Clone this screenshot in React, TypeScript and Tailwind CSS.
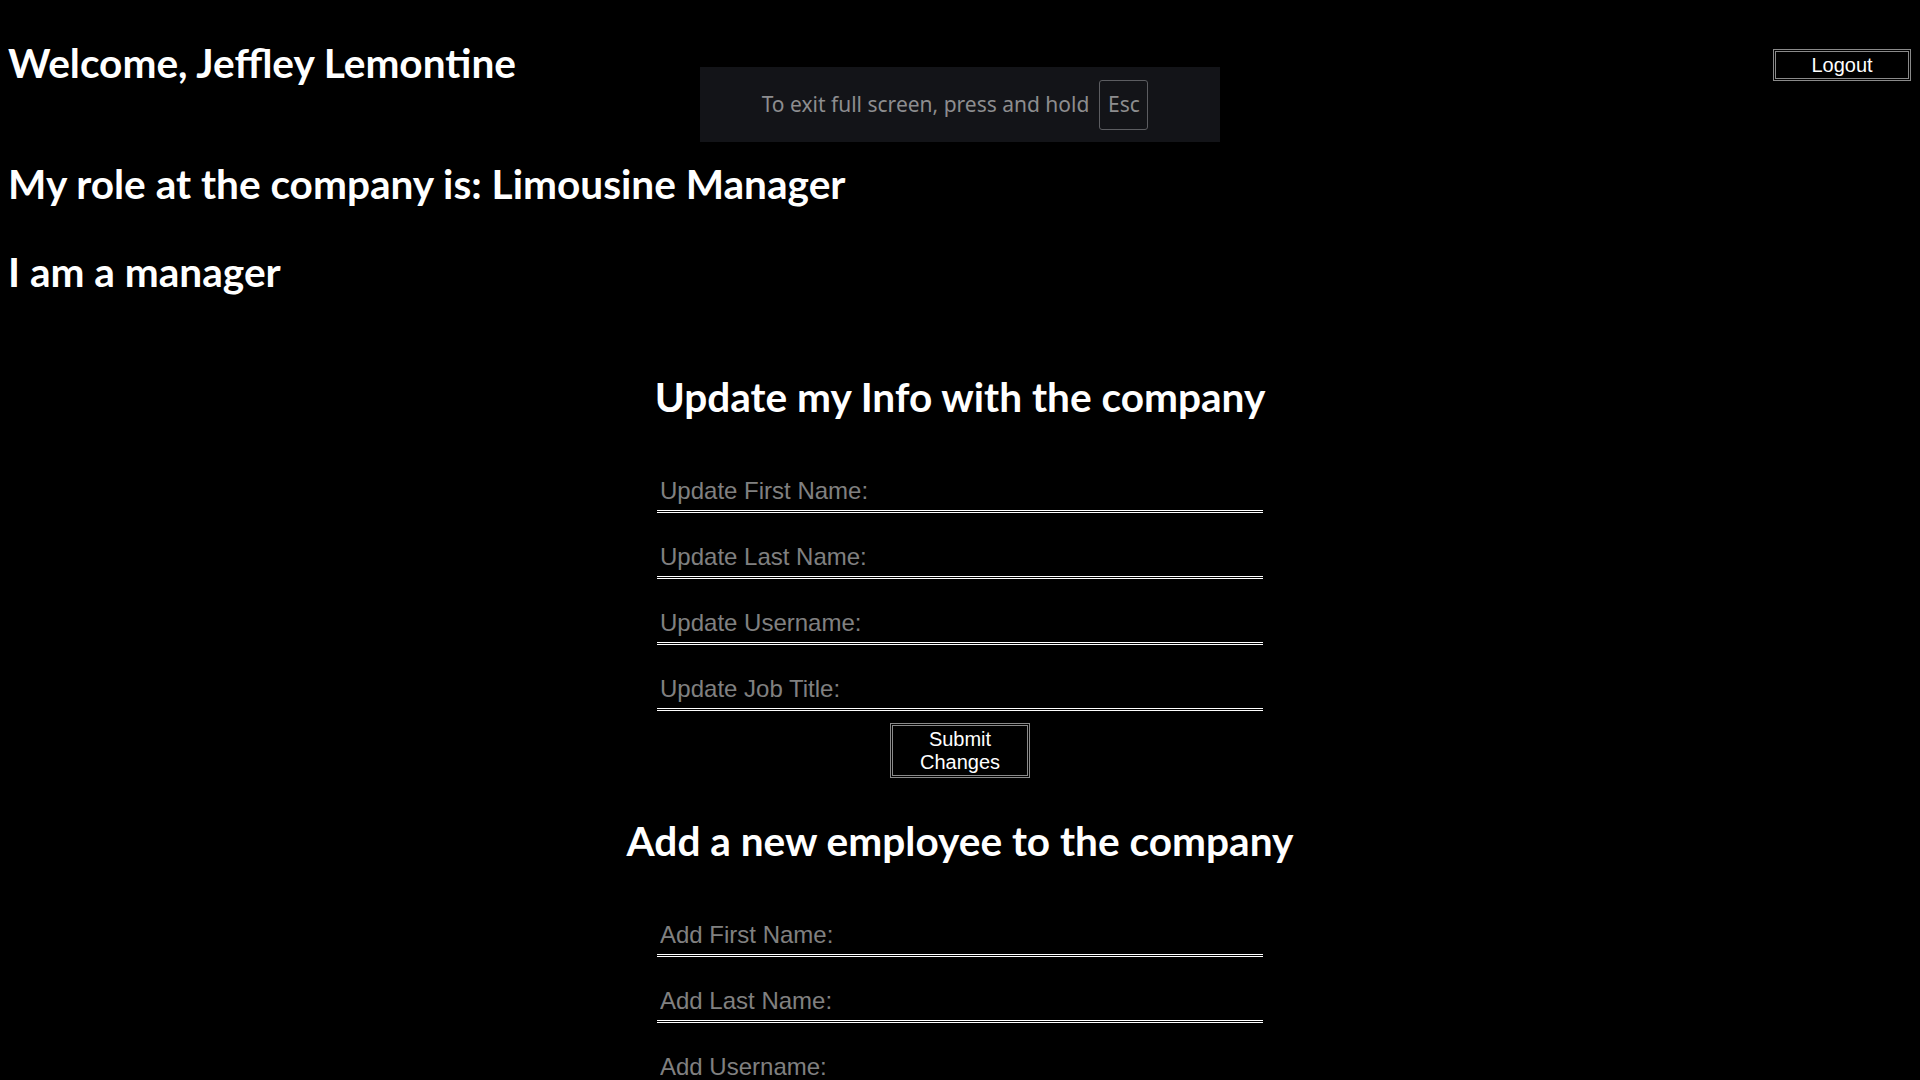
import React from "react";

const heading = "font-['Lato','Open_Sans',sans-serif] font-bold text-[40.6px] leading-[48px] text-white";

function Field({ placeholder, first }: { placeholder: string; first?: boolean }) {
  return (
    <input
      type="text"
      placeholder={placeholder}
      className={`${first ? "mt-[52px]" : "mt-[26px]"} block w-[606px] h-[40px] bg-transparent pl-[3px] pb-[2px] border-b-[3px] border-double border-white text-[24px] text-white font-['Liberation_Sans',Arial,sans-serif] placeholder:text-[#808080] outline-none`}
    />
  );
}

function FullscreenNotice() {
  return (
    <div className="fixed top-[67px] left-1/2 -translate-x-1/2 w-[520px] h-[75px] bg-[#131418] flex items-center justify-center gap-[10px] pr-[10px] font-['Noto_Sans','Open_Sans',sans-serif] text-[#8d8d8f]">
      <span className="text-[21px]">To exit full screen, press and hold</span>
      <span className="w-[49px] h-[50px] border border-[#5c5d61] rounded-[3px] flex items-center justify-center text-[21px]">Esc</span>
    </div>
  );
}

export default function App() {
  return (
    <div className="min-h-screen bg-black text-white px-[8px] pb-10">
      <div className="flex justify-between items-start">
        <h1 className={`${heading} mt-[39px]`}>Welcome, Jeffley Lemontine</h1>
        <button className="mt-[49px] mr-[1px] w-[138px] h-[32px] border-[3px] border-double border-[#8a8a8a] bg-black text-white text-[20px] leading-[23px] font-['Liberation_Sans',Arial,sans-serif]">
          Logout
        </button>
      </div>

      <h2 className={`${heading} mt-[73px]`}>My role at the company is: Limousine Manager</h2>
      <h2 className={`${heading} mt-[40px]`}>I am a manager</h2>

      <div className="flex flex-col items-center">
        <h2 className={`${heading} mt-[77px]`}>Update my Info with the company</h2>
        <form className="flex flex-col items-center" onSubmit={(e) => e.preventDefault()}>
          <Field placeholder="Update First Name:" first />
          <Field placeholder="Update Last Name:" />
          <Field placeholder="Update Username:" />
          <Field placeholder="Update Job Title:" />
          <button
            type="submit"
            className="mt-[12px] w-[140px] h-[55px] border-[3px] border-double border-[#8a8a8a] bg-black text-white text-[20px] leading-[23px] font-['Liberation_Sans',Arial,sans-serif]"
          >
            Submit Changes
          </button>
        </form>

        <h2 className={`${heading} mt-[39px]`}>Add a new employee to the company</h2>
        <form className="flex flex-col items-center" onSubmit={(e) => e.preventDefault()}>
          <Field placeholder="Add First Name:" first />
          <Field placeholder="Add Last Name:" />
          <Field placeholder="Add Username:" />
          <Field placeholder="Add Job Title:" />
          <Field placeholder="Add Password:" />
        </form>
      </div>

      <FullscreenNotice />
    </div>
  );
}
